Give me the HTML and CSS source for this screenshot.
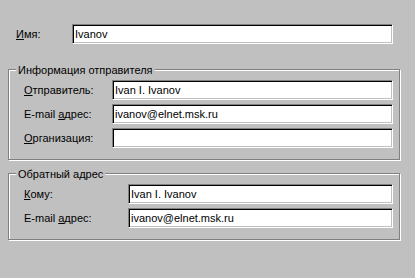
FILE: index.html
```html
<!DOCTYPE html>
<html lang="ru">
<head>
<meta charset="utf-8">
<title>Свойства</title>
<link rel="stylesheet" href="styles.css">
</head>
<body>
<div class="dialog">
  <div class="row-top">
    <label class="lbl"><u>И</u>мя:</label>
    <input class="field" type="text" value="Ivanov" readonly>
  </div>

  <div class="group">
    <div class="legend">Информация отправителя</div>
    <div class="rows rows-sender">
      <label class="lbl"><u>О</u>тправитель:</label>
      <input class="field" type="text" value="Ivan I. Ivanov" readonly>
      <label class="lbl">E-mail <u>а</u>дрес:</label>
      <input class="field" type="text" value="ivanov@elnet.msk.ru" readonly>
      <label class="lbl"><u>О</u>рганизация:</label>
      <input class="field" type="text" value="" readonly>
    </div>
  </div>

  <div class="group group-reply">
    <div class="legend">Обратный адрес</div>
    <div class="rows rows-reply">
      <label class="lbl"><u>К</u>ому:</label>
      <input class="field" type="text" value="Ivan I. Ivanov" readonly>
      <label class="lbl">E-mail <u>а</u>дрес:</label>
      <input class="field" type="text" value="ivanov@elnet.msk.ru" readonly>
    </div>
  </div>
</div>
</body>
</html>
```
FILE: styles.css
```css
html, body {
  margin: 0;
  padding: 0;
  background: #c0c0c0;
}

body {
  width: 415px;
  height: 278px;
  overflow: hidden;
  font-family: "Liberation Sans", Arial, sans-serif;
  font-size: 11px;
  line-height: 13px;
  color: #000;
}

.dialog {
  padding: 24px 0 0 8px;
}

.row-top {
  display: grid;
  grid-template-columns: 56px 321px;
  align-items: center;
  margin-left: 8px;
  margin-bottom: 25px;
}

.lbl {
  display: block;
  padding-top: 1px;
  white-space: nowrap;
}

.lbl u {
  text-decoration: underline;
  text-underline-offset: 1px;
}

.field {
  box-sizing: border-box;
  display: block;
  width: 100%;
  height: 20px;
  margin: 0;
  padding: 0 2px;
  font: inherit;
  color: #000;
  background: #fff;
  border: 1px solid;
  border-color: #808080 #fff #fff #808080;
  box-shadow: inset 1px 1px 0 #000, inset -1px -1px 0 #c0c0c0;
  outline: none;
  border-radius: 0;
}

.group {
  box-sizing: border-box;
  width: 392px;
  border: 1px solid #808080;
  box-shadow: inset 1px 1px 0 #fff, 1px 1px 0 #fff;
  padding: 10px 6px 11px 15px;
}

.group-reply {
  margin-top: 13px;
}

.legend {
  width: fit-content;
  margin: -16px 0 3px -8px;
  padding: 0 2px 0 2px;
  background: #c0c0c0;
  white-space: nowrap;
}

.rows {
  display: grid;
  row-gap: 4px;
  align-items: center;
}

.rows-sender {
  grid-template-columns: 88px 281px;
}

.rows-reply {
  grid-template-columns: 104px 265px;
}
```
